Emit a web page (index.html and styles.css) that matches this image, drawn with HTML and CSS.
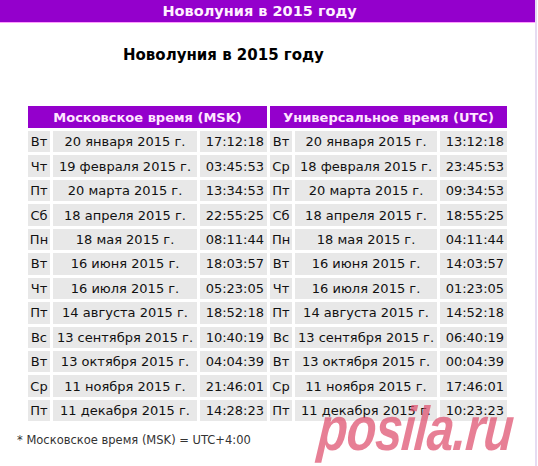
FILE: index.html
```html
<!DOCTYPE html>
<html lang="ru">
<head>
<meta charset="utf-8">
<title>Новолуния в 2015 году</title>
<link rel="stylesheet" href="styles.css">
</head>
<body>
<div class="page">
  <div class="topbar"><span class="topbar-title">Новолуния в 2015 году</span></div>
  <h1 class="heading">Новолуния в 2015 году</h1>
  <table class="moons">
    <colgroup>
      <col class="c-day"><col class="c-date"><col class="c-time">
      <col class="c-day"><col class="c-date2"><col class="c-time">
    </colgroup>
    <thead>
      <tr><th colspan="3">Московское время (MSK)</th><th colspan="3">Универсальное время (UTC)</th></tr>
    </thead>
    <tbody>
      <tr><td class="d">Вт</td><td class="dt">20 января 2015 г.</td><td class="t">17:12:18</td><td class="d">Вт</td><td class="dt">20 января 2015 г.</td><td class="t">13:12:18</td></tr>
      <tr><td class="d">Чт</td><td class="dt">19 февраля 2015 г.</td><td class="t">03:45:53</td><td class="d">Ср</td><td class="dt">18 февраля 2015 г.</td><td class="t">23:45:53</td></tr>
      <tr><td class="d">Пт</td><td class="dt">20 марта 2015 г.</td><td class="t">13:34:53</td><td class="d">Пт</td><td class="dt">20 марта 2015 г.</td><td class="t">09:34:53</td></tr>
      <tr><td class="d">Сб</td><td class="dt">18 апреля 2015 г.</td><td class="t">22:55:25</td><td class="d">Сб</td><td class="dt">18 апреля 2015 г.</td><td class="t">18:55:25</td></tr>
      <tr><td class="d">Пн</td><td class="dt">18 мая 2015 г.</td><td class="t">08:11:44</td><td class="d">Пн</td><td class="dt">18 мая 2015 г.</td><td class="t">04:11:44</td></tr>
      <tr><td class="d">Вт</td><td class="dt">16 июня 2015 г.</td><td class="t">18:03:57</td><td class="d">Вт</td><td class="dt">16 июня 2015 г.</td><td class="t">14:03:57</td></tr>
      <tr><td class="d">Чт</td><td class="dt">16 июля 2015 г.</td><td class="t">05:23:05</td><td class="d">Чт</td><td class="dt">16 июля 2015 г.</td><td class="t">01:23:05</td></tr>
      <tr><td class="d">Пт</td><td class="dt">14 августа 2015 г.</td><td class="t">18:52:18</td><td class="d">Пт</td><td class="dt">14 августа 2015 г.</td><td class="t">14:52:18</td></tr>
      <tr><td class="d">Вс</td><td class="dt">13 сентября 2015 г.</td><td class="t">10:40:19</td><td class="d">Вс</td><td class="dt">13 сентября 2015 г.</td><td class="t">06:40:19</td></tr>
      <tr><td class="d">Вт</td><td class="dt">13 октября 2015 г.</td><td class="t">04:04:39</td><td class="d">Вт</td><td class="dt">13 октября 2015 г.</td><td class="t">00:04:39</td></tr>
      <tr><td class="d">Ср</td><td class="dt">11 ноября 2015 г.</td><td class="t">21:46:01</td><td class="d">Ср</td><td class="dt">11 ноября 2015 г.</td><td class="t">17:46:01</td></tr>
      <tr><td class="d">Пт</td><td class="dt">11 декабря 2015 г.</td><td class="t">14:28:23</td><td class="d">Пт</td><td class="dt">11 декабря 2015 г.</td><td class="t">10:23:23</td></tr>
    </tbody>
  </table>
  <p class="note">* Московское время (MSK) = UTC+4:00</p>
  <div class="watermark">posila.ru</div>
</div>
</body>
</html>
```
FILE: styles.css
```css
html, body {
  margin: 0;
  padding: 0;
  background: #ffffff;
}
.page {
  position: relative;
  width: 535px;
  height: 466px;
  border-right: 2px solid #e6dcf2;
  font-family: "DejaVu Sans", Verdana, sans-serif;
  color: #111;
  overflow: hidden;
}
.topbar {
  height: 22px;
  background: #9400cc;
  border-bottom: 1px solid #ff9cff;
  display: flex;
  justify-content: center;
  align-items: center;
  padding-right: 16px;
}
.topbar-title {
  color: #fff0ff;
  font-weight: bold;
  font-size: 14.5px;
}
.heading {
  margin: 23px 0 0 123px;
  font-size: 15px;
  font-weight: bold;
  color: #000;
  line-height: 19px;
}
.moons {
  margin: 38px 0 0 25px;
  border-spacing: 3px;
  table-layout: fixed;
  width: 485px;
  font-size: 13px;
  color: #111;
}
.c-day { width: 22px; }
.c-date { width: 144px; }
.c-date2 { width: 142px; }
.c-time { width: 67px; }
.moons th {
  background: #9400cc;
  color: #ffe6ff;
  font-weight: bold;
  font-size: 13px;
  height: 22px;
  padding: 0;
  white-space: nowrap;
}
.moons td {
  background: #e8e8e8;
  height: 21.45px;
  line-height: 15px;
  padding: 0;
  white-space: nowrap;
  text-align: center;
}
.moons td.t { text-align: right; padding-right: 3px; }
.note {
  margin: 9px 0 0 17px;
  font-size: 11.5px;
  color: #333;
}
.watermark {
  position: absolute;
  left: 321px;
  top: 398px;
  font-family: "Liberation Sans", Arial, sans-serif;
  font-style: italic;
  font-weight: bold;
  font-size: 62px;
  line-height: 62px;
  letter-spacing: -1px;
  transform: scaleX(0.78) skewX(-6deg);
  transform-origin: left top;
  color: rgba(222, 78, 108, 0.72);
  white-space: nowrap;
}
```
